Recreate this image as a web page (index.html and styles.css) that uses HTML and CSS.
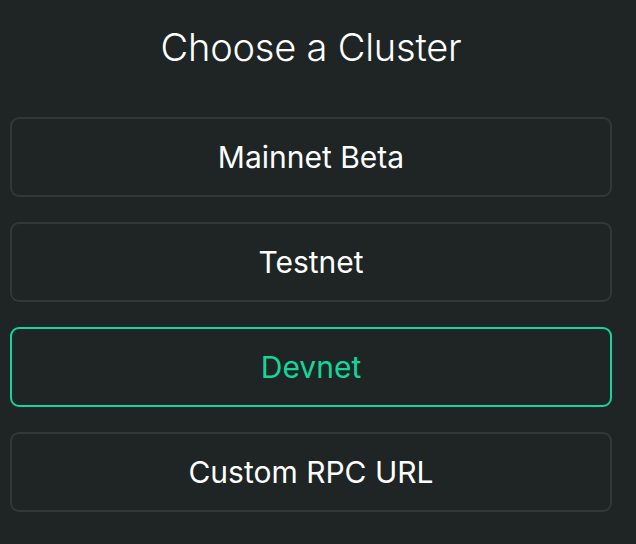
FILE: index.html
```html
<!DOCTYPE html>
<html lang="en">
<head>
<meta charset="utf-8">
<title>Choose a Cluster</title>
<link rel="stylesheet" href="styles.css">
</head>
<body>
<div class="modal">
  <h2 class="title">Choose a Cluster</h2>
  <div class="clusters">
    <button class="cluster">Mainnet Beta</button>
    <button class="cluster">Testnet</button>
    <button class="cluster active">Devnet</button>
    <button class="cluster">Custom RPC URL</button>
  </div>
</div>
</body>
</html>
```
FILE: styles.css
```css
html, body {
  margin: 0;
  padding: 0;
  background: #1e2524;
  height: 100%;
}
body {
  font-family: Inter, "Noto Sans", sans-serif;
  color: #ffffff;
}
.modal {
  width: 602px;
  margin-left: 10px;
  display: flex;
  flex-direction: column;
}
.title {
  margin: 23px 0 0;
  font-size: 38px;
  line-height: 48px;
  font-weight: 300;
  letter-spacing: -0.2px;
  text-align: center;
}
.clusters {
  margin-top: 46px;
  display: flex;
  flex-direction: column;
  gap: 25px;
}
.cluster {
  height: 80px;
  box-sizing: border-box;
  background: transparent;
  border: 2px solid #313937;
  border-radius: 9px;
  color: #ffffff;
  font-family: Inter, "Noto Sans", sans-serif;
  font-size: 30px;
  font-weight: 400;
  text-align: center;
  padding: 0;
}
.cluster.active {
  border-color: #14d69b;
  color: #14d69b;
}
```
